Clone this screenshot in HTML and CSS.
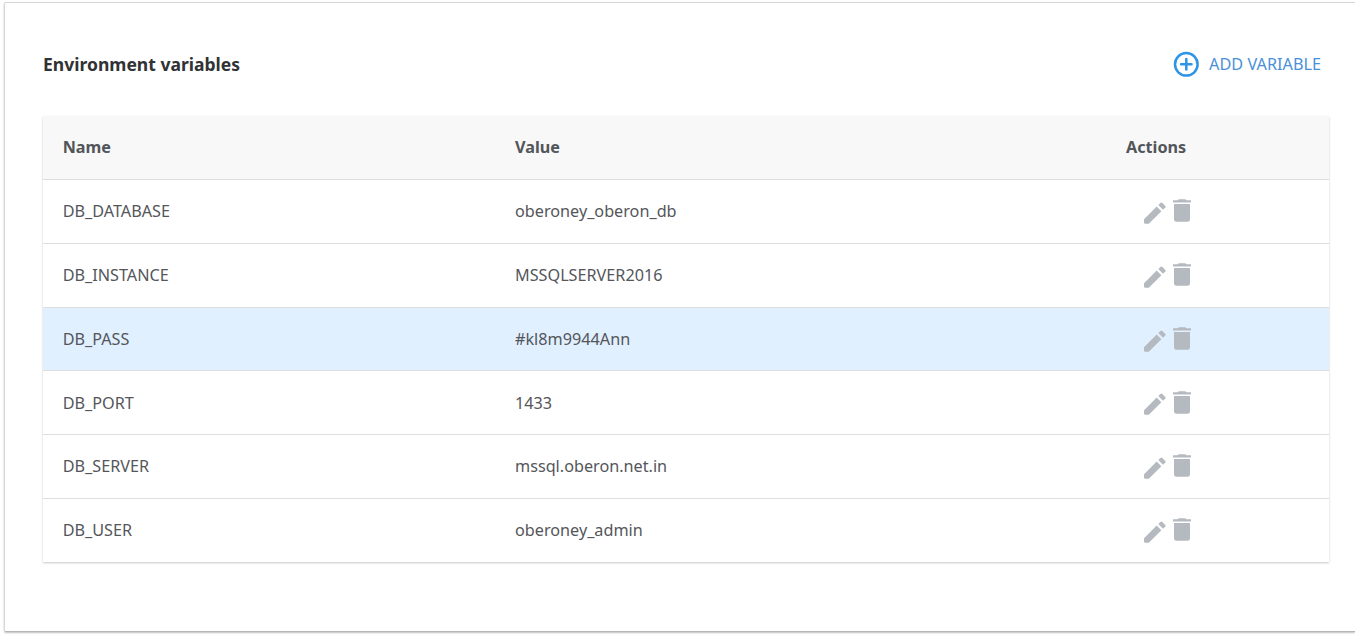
FILE: index.html
```html
<!DOCTYPE html>
<html lang="en">
<head>
<meta charset="utf-8">
<title>Environment variables</title>
<link rel="stylesheet" href="styles.css">
</head>
<body>
<svg class="sprite" aria-hidden="true">
  <symbol id="pencil" viewBox="0 0 22 22"><path d="M0 17.2 12.7 4.6l4.7 4.7L4.8 21.8H1.2Q0 21.8 0 20.6zM14.3 3.1l2.1-2.1q1-1 2 0l2.7 2.7q1 1 0 2L19 7.800z"/></symbol>
  <symbol id="trash" viewBox="0 0 18 23"><path d="M1 5h16v15.4q0 2.4-2.4 2.4H3.4Q1 22.800 1 20.4zM.3 1.300h4.2Q5.300.2 6.500.2h5q1.200 0 2 1.100h4.200q.3 0 .3.3v1.600q0 .3-.3.300H.3Q0 3.500 0 3.200V1.600q0-.3.3-.3z"/></symbol>
</svg>
<main class="card">
  <header class="heading">
    <h1 class="title">Environment variables</h1>
    <button class="add"><svg class="plus" viewBox="0 0 26 26"><circle cx="13.3" cy="13.3" r="11.3"/><path d="M13.3 8.1v10.4M8.1 13.3h10.4"/></svg><span>ADD VARIABLE</span></button>
  </header>
  <section class="table">
    <div class="row head"><span>Name</span><span>Value</span><span>Actions</span></div>
    <div class="row"><span>DB_DATABASE</span><span>oberoney_oberon_db</span><span class="actions"><svg class="pencil"><use href="#pencil"/></svg><svg class="trash"><use href="#trash"/></svg></span></div>
    <div class="row"><span>DB_INSTANCE</span><span>MSSQLSERVER2016</span><span class="actions"><svg class="pencil"><use href="#pencil"/></svg><svg class="trash"><use href="#trash"/></svg></span></div>
    <div class="row selected"><span>DB_PASS</span><span>#kl8m9944Ann</span><span class="actions"><svg class="pencil"><use href="#pencil"/></svg><svg class="trash"><use href="#trash"/></svg></span></div>
    <div class="row"><span>DB_PORT</span><span>1433</span><span class="actions"><svg class="pencil"><use href="#pencil"/></svg><svg class="trash"><use href="#trash"/></svg></span></div>
    <div class="row"><span>DB_SERVER</span><span>mssql.oberon.net.in</span><span class="actions"><svg class="pencil"><use href="#pencil"/></svg><svg class="trash"><use href="#trash"/></svg></span></div>
    <div class="row"><span>DB_USER</span><span>oberoney_admin</span><span class="actions"><svg class="pencil"><use href="#pencil"/></svg><svg class="trash"><use href="#trash"/></svg></span></div>
  </section>
</main>
</body>
</html>
```

FILE: styles.css
```css
* { box-sizing: border-box; }
body { margin: 0; height: 636px; overflow: hidden; background: #fff; font: 16.22px/24px "Noto Sans", sans-serif; color: #54565a; }
.sprite { display: none; }
.card { margin: 2px 0 0 4px; height: 630px; padding: 38px 25px 0 38px; border: 1px solid #d6d7d9; border-right: 0; border-bottom-color: #b3b5b8; border-radius: 2px 0 0 2px; box-shadow: 0 1px 2px rgba(0,0,0,.25); }
.heading { height: 46px; display: flex; align-items: center; justify-content: space-between; padding-right: 9px; }
.title { margin: 0; font-size: 17.55px; line-height: 24px; font-weight: 700; color: #303234; }
.add { display: flex; align-items: center; gap: 10px; padding: 0; border: 0; background: none; font: 16.26px/24px "Noto Sans", sans-serif; color: #4a90d9; }
.plus { width: 26px; height: 26px; fill: none; stroke: #2e95e6; stroke-width: 2.5; stroke-linecap: round; }
.table { margin-top: 29px; width: 1286px; box-shadow: 0 1px 2px rgba(0,0,0,.22); }
.row { display: grid; grid-template-columns: 452.3px 611px 1fr; align-items: center; height: 64px; padding: 0 0 1px 19.7px; border-bottom: 1px solid #dcdee0; }
.row:last-child { border-bottom: 0; height: 63px; }
.head { font-weight: 700; font-size: 16.2px; color: #52555a; background: #f8f8f8; }
.selected { height: 63px; padding-bottom: 0; background: #e0f0ff; }
.selected + .row { padding-bottom: 0; }
.actions { display: flex; align-items: center; gap: 7px; padding-left: 18px; fill: #b5bac0; }
.pencil { width: 22px; height: 22px; margin-top: 3px; }
.trash { width: 18px; height: 23px; margin-top: -1px; }
```
